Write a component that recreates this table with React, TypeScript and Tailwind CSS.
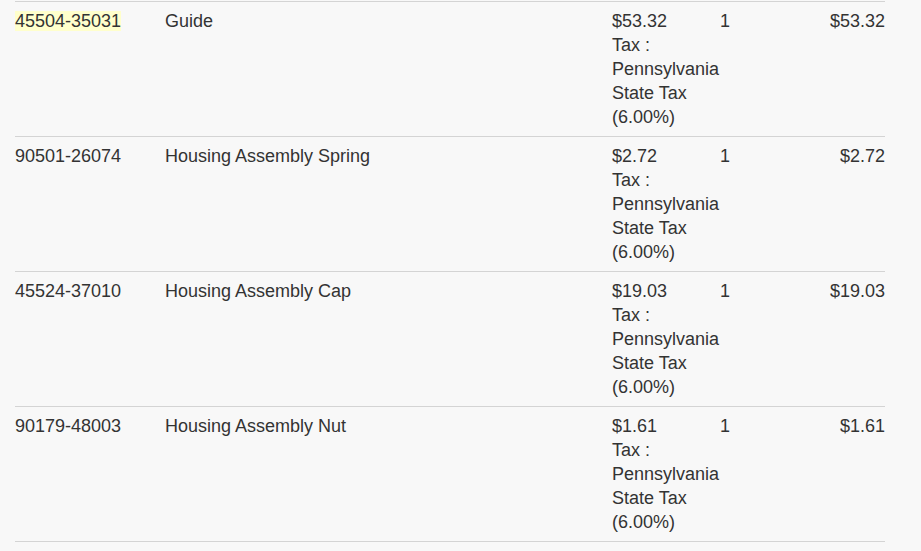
const rows = [
  { part: '45504-35031', name: 'Guide', price: '$53.32', qty: 1, total: '$53.32', mark: true },
  { part: '90501-26074', name: 'Housing Assembly Spring', price: '$2.72', qty: 1, total: '$2.72' },
  { part: '45524-37010', name: 'Housing Assembly Cap', price: '$19.03', qty: 1, total: '$19.03' },
  { part: '90179-48003', name: 'Housing Assembly Nut', price: '$1.61', qty: 1, total: '$1.61' },
]

export default function App() {
  return (
    <div className="min-h-[551px] bg-[#f8f8f8] px-[15px] pt-px font-['Liberation_Sans',Arial,sans-serif] text-[18px] leading-[24px] text-[#333]">
      <table className="w-[870px] border-collapse">
        <tbody>
          {rows.map((r) => (
            <tr key={r.part} className="border-t border-b border-[#d4d4d4] align-top">
              <td className="w-[150px] pt-[7px] pb-[7px]">
                {r.mark ? <span className="bg-[#ffffcc]">{r.part}</span> : r.part}
              </td>
              <td className="w-[447px] pt-[7px] pb-[7px]">{r.name}</td>
              <td className="w-[108px] pt-[7px] pb-[7px]">
                {r.price}
                <br />
                Tax :
                <br />
                Pennsylvania State Tax (6.00%)
              </td>
              <td className="w-[60px] pt-[7px] pb-[7px]">{r.qty}</td>
              <td className="pt-[7px] pb-[7px] text-right">{r.total}</td>
            </tr>
          ))}
        </tbody>
      </table>
    </div>
  )
}
